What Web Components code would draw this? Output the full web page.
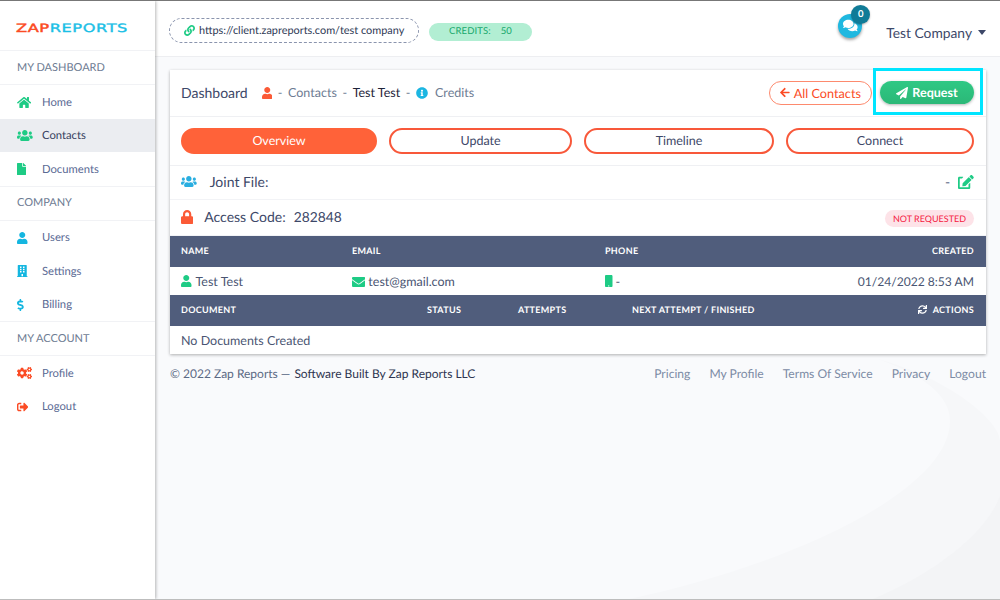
<!DOCTYPE html>
<html lang="en">
<head>
<meta charset="utf-8">
<title>Zap Reports</title>
<style>
html,body{margin:0;padding:0;height:100%;overflow:hidden}
body{font-family:Lato,"Liberation Sans",sans-serif;background:#f9fafc;text-rendering:geometricPrecision}
</style>
</head>
<body>
<zr-app>
  <zr-sidebar slot="side"></zr-sidebar>
  <zr-topbar slot="top"></zr-topbar>
  <zr-card slot="main">
    <zr-card-head></zr-card-head>
    <zr-tabs></zr-tabs>
    <zr-info-rows></zr-info-rows>
    <zr-table cols="171px 253px 1fr 200px">
      <span>Name</span><span>Email</span><span>Phone</span><span class="r">Created</span>
      <b slot="row"><zr-icon name="user" color="#1ecb85" h="12" gap="4"></zr-icon>Test Test</b>
      <b slot="row"><zr-icon name="envelope" color="#1ecb85" h="10" gap="3"></zr-icon>test@gmail.com</b>
      <b slot="row"><zr-icon name="mobile" color="#1ecb85" h="12" gap="3"></zr-icon>-</b>
      <b slot="row" class="r">01/24/2022 8:53 AM</b>
    </zr-table>
    <zr-table cols="246px 91px 114px 1fr 120px">
      <span>Document</span><span>Status</span><span>Attempts</span><span>Next Attempt / Finished</span>
      <span class="r"><zr-icon name="sync" color="#fff" h="9" gap="6"></zr-icon>Actions</span>
      <b slot="row" class="wide">No Documents Created</b>
    </zr-table>
  </zr-card>
  <zr-footer slot="main"></zr-footer>
</zr-app>
<script>
const P={
user:[448,512,"M224 256c70.7 0 128-57.3 128-128S294.7 0 224 0 96 57.3 96 128s57.3 128 128 128zm89.6 32h-16.7c-22.2 10.2-46.9 16-72.9 16s-50.6-5.8-72.9-16h-16.7C60.2 288 0 348.2 0 422.4V464c0 26.5 21.5 48 48 48h352c26.5 0 48-21.5 48-48v-41.6c0-74.2-60.2-134.4-134.4-134.4z"],
file:[384,512,"M224 136V0H24C10.7 0 0 10.7 0 24v464c0 13.3 10.7 24 24 24h336c13.3 0 24-10.7 24-24V160H248c-13.2 0-24-10.8-24-24zm160-14.1v6.1H256V0h6.1c6.4 0 12.5 2.5 17 7l97.9 98c4.5 4.5 7 10.6 7 16.9z"],
lock:[448,512,"M400 224h-24v-72C376 68.2 307.8 0 224 0S72 68.2 72 152v72H48c-26.5 0-48 21.5-48 48v192c0 26.5 21.5 48 48 48h352c26.5 0 48-21.5 48-48V272c0-26.5-21.5-48-48-48zm-104 0H152v-72c0-39.7 32.3-72 72-72s72 32.3 72 72v72z"],
envelope:[512,384,"M502.3 126.8c3.9-3.1 9.7-.2 9.7 4.7V336c0 26.5-21.5 48-48 48H48c-26.5 0-48-21.5-48-48V131.6c0-5 5.7-7.8 9.7-4.7 22.4 17.4 52.1 39.5 154.1 113.6 21.1 15.4 56.7 47.8 92.2 47.6 35.7.3 72-32.8 92.3-47.6 102-74.1 131.6-96.3 154-113.7zM256 256c23.2.4 56.6-29.2 73.4-41.4 132.7-96.3 142.8-104.7 173.4-128.7 5.8-4.5 9.2-11.5 9.2-18.9V48c0-26.5-21.5-48-48-48H48C21.5 0 0 21.5 0 48v19c0 7.4 3.4 14.3 9.2 18.9 30.6 23.9 40.7 32.4 173.4 128.7 16.8 12.2 50.2 41.8 73.4 41.4z"],
plane:[512,512,"M476 3.2L12.5 270.6c-18.1 10.4-15.8 35.6 2.2 43.2L121 358.4l287.3-253.2c5.5-4.9 13.3 2.6 8.6 8.3L176 407v80.5c0 23.6 28.5 32.9 42.5 15.8L282 426l124.6 52.2c14.2 6 30.4-2.9 33-18.2l72-432C515 7.8 493.3-6.8 476 3.2z"],
left:[448,512,"M257.5 445.1l-22.2 22.2c-9.4 9.4-24.6 9.4-33.9 0L7 273c-9.4-9.4-9.4-24.6 0-33.9L201.4 44.7c9.4-9.4 24.6-9.4 33.9 0l22.2 22.2c9.5 9.5 9.3 25-.4 34.3L136.6 216H424c13.3 0 24 10.7 24 24v32c0 13.3-10.7 24-24 24H136.6l120.5 114.8c9.8 9.3 10 24.8.4 34.3z"],
info:[512,512,"M256 8C119.043 8 8 119.083 8 256c0 136.997 111.043 248 248 248s248-111.003 248-248C504 119.083 392.957 8 256 8zm0 110c23.196 0 42 18.804 42 42s-18.804 42-42 42-42-18.804-42-42 18.804-42 42-42zm56 254c0 6.627-5.373 12-12 12h-88c-6.627 0-12-5.373-12-12v-24c0-6.627 5.373-12 12-12h12v-64h-12c-6.627 0-12-5.373-12-12v-24c0-6.627 5.373-12 12-12h64c6.627 0 12 5.373 12 12v100h12c6.627 0 12 5.373 12 12v24z"],
users:[640,448,"M96 192c35.3 0 64-28.7 64-64s-28.7-64-64-64-64 28.7-64 64 28.7 64 64 64zm448 0c35.3 0 64-28.7 64-64s-28.7-64-64-64-64 28.7-64 64 28.7 64 64 64zm32 32h-64c-17.6 0-33.5 7.1-45.1 18.6 40.3 22.1 68.9 62 75.1 109.4h66c17.7 0 32-14.3 32-32v-32c0-35.3-28.7-64-64-64zm-256 0c61.9 0 112-50.1 112-112S381.9 0 320 0 208 50.1 208 112s50.1 112 112 112zm76.8 32h-8.3c-20.8 10-43.9 16-68.5 16s-47.6-6-68.5-16h-8.3C179.6 256 128 307.6 128 371.2V400c0 26.5 21.5 48 48 48h288c26.5 0 48-21.5 48-48v-28.8c0-63.6-51.6-115.2-115.2-115.2zm-223.7-13.4C161.5 231.1 145.6 224 128 224H64c-35.3 0-64 28.7-64 64v32c0 17.7 14.3 32 32 32h65.9c6.3-47.4 34.9-87.3 75.2-109.4z"],
home:[576,448,"M280.37 116.26L96 268.11V432a16 16 0 0 0 16 16l112.06-.29a16 16 0 0 0 15.92-16V336a16 16 0 0 1 16-16h64a16 16 0 0 1 16 16v95.64a16 16 0 0 0 16 16.05L464 448a16 16 0 0 0 16-16V268L295.67 116.26a12.19 12.19 0 0 0-15.3 0zM571.6 219.47L488 150.56V12.05a12 12 0 0 0-12-12h-56a12 12 0 0 0-12 12v72.61L318.47 11a48 48 0 0 0-61 0L4.34 219.47a12 12 0 0 0-1.6 16.9l25.5 31A12 12 0 0 0 45.15 269l235.22-193.74a12.19 12.19 0 0 1 15.3 0L530.9 269a12 12 0 0 0 16.9-1.6l25.5-31a12 12 0 0 0-1.7-16.93z"],
building:[448,512,"M436 480h-20V24c0-13.255-10.745-24-24-24H56C42.745 0 32 10.745 32 24v456H12c-6.627 0-12 5.373-12 12v20h448v-20c0-6.627-5.373-12-12-12zM128 76c0-6.627 5.373-12 12-12h40c6.627 0 12 5.373 12 12v40c0 6.627-5.373 12-12 12h-40c-6.627 0-12-5.373-12-12V76zm0 96c0-6.627 5.373-12 12-12h40c6.627 0 12 5.373 12 12v40c0 6.627-5.373 12-12 12h-40c-6.627 0-12-5.373-12-12v-40zm52 148h-40c-6.627 0-12-5.373-12-12v-40c0-6.627 5.373-12 12-12h40c6.627 0 12 5.373 12 12v40c0 6.627-5.373 12-12 12zm76 160h-64v-84c0-6.627 5.373-12 12-12h40c6.627 0 12 5.373 12 12v84zm64-172c0 6.627-5.373 12-12 12h-40c-6.627 0-12-5.373-12-12v-40c0-6.627 5.373-12 12-12h40c6.627 0 12 5.373 12 12v40zm0-96c0 6.627-5.373 12-12 12h-40c-6.627 0-12-5.373-12-12v-40c0-6.627 5.373-12 12-12h40c6.627 0 12 5.373 12 12v40zm0-96c0 6.627-5.373 12-12 12h-40c-6.627 0-12-5.373-12-12V76c0-6.627 5.373-12 12-12h40c6.627 0 12 5.373 12 12v40z"],
dollar:[288,512,"M209.2 233.4l-108-31.6C88.7 198.2 80 186.5 80 173.5c0-16.3 13.2-29.5 29.5-29.5h66.3c12.2 0 24.2 3.7 34.2 10.5 6.1 4.1 14.3 3.1 19.5-2l34.8-34c7.1-6.9 6.1-18.4-1.8-24.5C238 74.8 207.4 64.1 176 64V16c0-8.8-7.2-16-16-16h-32c-8.8 0-16 7.2-16 16v48h-2.5C45.8 64-5.4 118.7.5 183.6c4.2 46.1 39.4 83.6 83.8 96.6l102.5 30c12.5 3.7 21.2 15.3 21.2 28.3 0 16.3-13.2 29.5-29.5 29.5h-66.3C100 368 88 364.3 78 357.5c-6.1-4.1-14.3-3.1-19.5 2l-34.8 34c-7.1 6.9-6.1 18.4 1.8 24.5 24.5 19.2 55.1 29.9 86.5 30v48c0 8.8 7.2 16 16 16h32c8.8 0 16-7.2 16-16v-48.2c46.6-.9 90.3-28.6 105.7-72.7 21.5-61.6-14.6-124.8-72.5-141.7z"],
signout:[512,448,"M497 241L329 409c-15 15-41 4.5-41-17v-96H152c-13.3 0-24-10.7-24-24v-96c0-13.3 10.7-24 24-24h136V56c0-21.4 25.9-32 41-17l168 168c9.3 9.4 9.3 24.6 0 34zM192 404v-40c0-6.6-5.4-12-12-12H96c-17.7 0-32-14.3-32-32V128c0-17.7 14.3-32 32-32h84c6.6 0 12-5.4 12-12V44c0-6.6-5.4-12-12-12H96C43 32 0 75 0 128v192c0 53 43 96 96 96h84c6.6 0 12-5.4 12-12z"],
link:[512,512,"M326.612 185.391c59.747 59.809 58.927 155.698.36 214.59-.11.12-.24.25-.36.37l-67.2 67.2c-59.27 59.27-155.699 59.262-214.96 0-59.27-59.26-59.27-155.7 0-214.96l37.106-37.106c9.84-9.84 26.786-3.3 27.294 10.606.648 17.722 3.826 35.527 9.69 52.721 1.986 5.822.567 12.262-3.783 16.612l-13.087 13.087c-28.026 28.026-28.905 73.66-1.155 101.96 28.024 28.579 74.086 28.749 102.325.51l67.2-67.19c28.191-28.191 28.073-73.757 0-101.83-3.701-3.694-7.429-6.564-10.341-8.569a16.037 16.037 0 0 1-6.947-12.606c-.396-10.567 3.348-21.456 11.698-29.806l21.054-21.055c5.521-5.521 14.182-6.199 20.584-1.731a152.482 152.482 0 0 1 20.522 17.197zM467.547 44.449c-59.261-59.262-155.69-59.27-214.96 0l-67.2 67.2c-.12.12-.25.25-.36.37-58.566 58.892-59.387 154.781.36 214.59a152.454 152.454 0 0 0 20.521 17.196c6.402 4.468 15.064 3.789 20.584-1.731l21.054-21.055c8.35-8.35 12.094-19.239 11.698-29.806a16.037 16.037 0 0 0-6.947-12.606c-2.912-2.005-6.64-4.875-10.341-8.569-28.073-28.073-28.191-73.639 0-101.83l67.2-67.19c28.239-28.239 74.3-28.069 102.325.51 27.75 28.3 26.872 73.934-1.155 101.96l-13.087 13.087c-4.35 4.35-5.769 10.79-3.783 16.612 5.864 17.194 9.042 34.999 9.69 52.721.509 13.906 17.454 20.446 27.294 10.606l37.106-37.106c59.271-59.259 59.271-155.699.001-214.959z"],
comments:[576,512,"M416 192c0-88.4-93.1-160-208-160S0 103.6 0 192c0 34.3 14.1 65.9 38 92-13.4 30.2-35.5 54.2-35.8 54.5-2.2 2.3-2.8 5.7-1.5 8.7S4.8 352 8 352c36.6 0 66.9-12.3 88.7-25 32.2 15.7 70.3 25 111.3 25 114.9 0 208-71.6 208-160zm122 220c23.9-26 38-57.7 38-92 0-66.9-53.5-124.2-129.3-148.1.9 6.6 1.3 13.3 1.3 20.1 0 105.9-107.7 192-240 192-10.8 0-21.3-.8-31.7-1.9C207.8 439.6 281.8 480 368 480c41 0 79.1-9.2 111.3-25 21.8 12.7 52.1 25 88.7 25 3.2 0 6.1-1.9 7.3-4.8 1.3-2.9.7-6.3-1.5-8.7-.3-.3-22.4-24.2-35.8-54.5z"],
edit:[576,512,"M402.6 83.2l90.2 90.2c3.8 3.8 3.8 10 0 13.8L274.4 405.6l-92.8 10.3c-12.4 1.4-22.9-9.1-21.5-21.5l10.3-92.8L388.8 83.2c3.8-3.8 10-3.8 13.8 0zm162-22.9l-48.8-48.8c-15.2-15.2-39.9-15.2-55.2 0l-35.4 35.4c-3.8 3.8-3.8 10 0 13.8l90.2 90.2c3.8 3.8 10 3.8 13.8 0l35.4-35.4c15.2-15.3 15.2-40 0-55.2zM384 346.2V448H64V128h73.2c3.2 0 6.2-1.3 8.5-3.5l40-40c7.6-7.6 2.2-20.5-8.5-20.5H48C21.5 64 0 85.5 0 112v352c0 26.5 21.5 48 48 48h352c26.5 0 48-21.5 48-48V306.2c0-10.7-12.9-16-20.5-8.5l-40 40c-2.2 2.3-3.5 5.3-3.5 8.5z"],
mobile:[320,512,"M272 0H48C21.5 0 0 21.5 0 48v416c0 26.5 21.5 48 48 48h224c26.5 0 48-21.5 48-48V48c0-26.5-21.5-48-48-48zM160 488c-15 0-27-11-27-24s12-24 27-24 27 11 27 24-12 24-27 24z"],
sync:[512,512,"M440.65 12.57l4 82.77A247.16 247.16 0 0 0 255.83 8C134.73 8 33.91 94.92 12.29 209.82A12 12 0 0 0 24.09 224h49.05a12 12 0 0 0 11.67-9.26 175.91 175.91 0 0 1 317-56.94l-101.46-4.86a12 12 0 0 0-12.57 12v47.41a12 12 0 0 0 12 12H500a12 12 0 0 0 12-12V12a12 12 0 0 0-12-12h-47.37a12 12 0 0 0-11.98 12.57zM255.83 432a175.61 175.61 0 0 1-146-77.8l101.8 4.87a12 12 0 0 0 12.57-12v-47.4a12 12 0 0 0-12-12H12a12 12 0 0 0-12 12V500a12 12 0 0 0 12 12h47.35a12 12 0 0 0 12-12.6l-4.15-82.57A247.17 247.17 0 0 0 255.83 504c121.11 0 221.93-86.92 243.55-201.82a12 12 0 0 0-11.8-14.18h-49.05a12 12 0 0 0-11.67 9.26A175.86 175.86 0 0 1 255.83 432z"],
cogs:[640,512,"M512.1 191l-8.2 14.3c-3 5.3-9.4 7.5-15.1 5.4-11.8-4.4-22.6-10.7-32.1-18.6-4.6-3.8-5.8-10.5-2.8-15.7l8.2-14.3c-6.9-8-12.3-17.3-15.9-27.4h-16.5c-6 0-11.2-4.3-12.2-10.3-2-12-2.1-24.6 0-37.1 1-6 6.2-10.4 12.2-10.4h16.5c3.6-10.1 9-19.4 15.9-27.4l-8.2-14.3c-3-5.2-1.9-11.9 2.8-15.7 9.5-7.9 20.4-14.2 32.1-18.6 5.7-2.1 12.1.1 15.1 5.4l8.2 14.3c10.5-1.9 21.2-1.9 31.7 0L552 6.3c3-5.3 9.4-7.5 15.1-5.4 11.8 4.4 22.6 10.7 32.1 18.6 4.6 3.8 5.8 10.5 2.8 15.7l-8.2 14.3c6.9 8 12.3 17.3 15.9 27.4h16.5c6 0 11.2 4.3 12.2 10.3 2 12 2.1 24.6 0 37.1-1 6-6.2 10.4-12.2 10.4h-16.5c-3.6 10.1-9 19.4-15.9 27.4l8.2 14.3c3 5.2 1.9 11.9-2.8 15.7-9.5 7.9-20.4 14.2-32.1 18.6-5.7 2.1-12.1-.1-15.1-5.4l-8.2-14.3c-10.4 1.9-21.2 1.9-31.7 0zm-10.5-58.8c38.5 29.6 82.4-14.3 52.8-52.8-38.5-29.7-82.4 14.3-52.8 52.8zM386.3 286.1l33.7 16.8c10.1 5.8 14.5 18.1 10.5 29.1-8.9 24.2-26.4 46.4-42.6 65.8-7.4 8.9-20.2 11.1-30.3 5.3l-29.1-16.8c-16 13.7-34.6 24.6-54.9 31.7v33.6c0 11.6-8.3 21.6-19.7 23.6-24.6 4.2-50.4 4.4-75.9 0-11.5-2-20-11.9-20-23.6V418c-20.3-7.2-38.9-18-54.9-31.7L74 403c-10 5.8-22.9 3.6-30.3-5.3-16.2-19.4-33.3-41.6-42.2-65.7-4-10.9.4-23.2 10.5-29.1l33.3-16.8c-3.9-20.9-3.9-42.4 0-63.4L12 205.8c-10.1-5.8-14.6-18.1-10.5-29 8.9-24.2 26-46.4 42.2-65.8 7.4-8.9 20.2-11.1 30.3-5.3l29.1 16.8c16-13.7 34.6-24.6 54.9-31.7V57.1c0-11.5 8.2-21.5 19.6-23.5 24.6-4.2 50.5-4.4 76-.1 11.5 2 20 11.9 20 23.6v33.6c20.3 7.2 38.9 18 54.9 31.7l29.1-16.8c10-5.8 22.9-3.6 30.3 5.3 16.2 19.4 33.2 41.6 42.1 65.8 4 10.9.1 23.2-10 29.1l-33.7 16.8c3.9 21 3.9 42.5 0 63.5zm-117.6 21.1c59.2-77-28.7-164.9-105.7-105.7-59.2 77 28.7 164.9 105.7 105.7zm243.4 182.7l-8.2 14.3c-3 5.3-9.4 7.5-15.1 5.4-11.8-4.4-22.6-10.7-32.1-18.6-4.6-3.8-5.8-10.5-2.8-15.7l8.2-14.3c-6.9-8-12.3-17.3-15.9-27.4h-16.5c-6 0-11.2-4.3-12.2-10.3-2-12-2.1-24.6 0-37.1 1-6 6.2-10.4 12.2-10.4h16.5c3.6-10.1 9-19.4 15.9-27.4l-8.2-14.3c-3-5.2-1.9-11.9 2.8-15.7 9.5-7.9 20.4-14.2 32.1-18.6 5.7-2.1 12.1.1 15.1 5.4l8.2 14.3c10.5-1.9 21.2-1.9 31.7 0l8.2-14.3c3-5.3 9.4-7.5 15.1-5.4 11.8 4.4 22.6 10.7 32.1 18.6 4.6 3.8 5.8 10.5 2.8 15.7l-8.2 14.3c6.9 8 12.3 17.3 15.9 27.4h16.5c6 0 11.2 4.3 12.2 10.3 2 12 2.1 24.6 0 37.1-1 6-6.2 10.4-12.2 10.4h-16.5c-3.6 10.1-9 19.4-15.9 27.4l8.2 14.3c3 5.2 1.9 11.9-2.8 15.7-9.5 7.9-20.4 14.2-32.1 18.6-5.7 2.1-12.1-.1-15.1-5.4l-8.2-14.3c-10.4 1.9-21.2 1.9-31.7 0zM501.6 431c38.5 29.6 82.4-14.3 52.8-52.8-38.5-29.6-82.4 14.3-52.8 52.8z"]
};
function def(tag,html,setup){
  customElements.define(tag,class extends HTMLElement{
    connectedCallback(){
      if(this.shadowRoot)return;
      const s=this.attachShadow({mode:"open"});
      s.innerHTML=typeof html==="function"?html(this):html;
      if(setup)setup(this,s);
    }
  });
}
def("zr-icon",el=>{
  const [w,h,d]=P[el.getAttribute("name")];
  const H=+el.getAttribute("h")||12;
  return `<style>:host{display:inline-flex;vertical-align:-1px;line-height:0;margin-right:${el.getAttribute("gap")||0}px}svg{display:block}</style>
  <svg xmlns="http://www.w3.org/2000/svg" viewBox="0 0 ${w} ${h}" width="${(H*w/h).toFixed(2)}" height="${H}" fill="${el.getAttribute("color")||"currentColor"}"><path d="${d}"/></svg>`;
});
def("zr-app",`<style>
:host{display:grid;grid-template-columns:155px 1fr;grid-template-rows:56px 1fr;width:1000px;height:600px;box-sizing:border-box;border-top:1px solid #777;border-bottom:1px solid #bdbdbd;position:relative;overflow:hidden;background:#f9fafc}
.bg{position:absolute;inset:0;z-index:0}
::slotted([slot=side]){grid-row:1 / 3;z-index:2}
::slotted([slot=top]){z-index:1}
main{position:relative;z-index:1;padding:13px 14px 0 15px;min-width:0}
</style>
<svg class="bg" width="1000" height="600" viewBox="0 0 1000 600">
<path d="M620 600C790 565 950 490 950 420C950 395 925 375 878 358C950 378 1000 420 1000 440V600Z" fill="#f6f7f9"/>
<path d="M868 600C930 575 985 535 1000 495V600Z" fill="#f3f4f6"/>
</svg>
<slot name="side"></slot><slot name="top"></slot><main><slot name="main"></slot></main>`);
def("zr-nav-heading",`<style>:host{display:flex;align-items:center;box-sizing:border-box;height:35px;padding:0 0 1px 17px;font-size:11px;color:#6d7b92;border-bottom:1px solid #f1f2f5;border-top:1px solid #f1f2f5}</style><slot></slot>`);
def("zr-nav-item",el=>`<style>:host{display:flex;align-items:center;box-sizing:border-box;height:33.5px;padding-top:1px;font-size:11.25px;color:${el.hasAttribute("active")?"#36415f":"#5a6a94"};background:${el.hasAttribute("active")?"#ebedf1":"transparent"}}
.i{width:42px;box-sizing:border-box;padding-left:17px;display:flex;align-items:center}</style>
<span class="i"><zr-icon name="${el.getAttribute("icon")}" color="${el.getAttribute("color")}" h="${el.getAttribute("h")||11}"></zr-icon></span><slot></slot>`);
def("zr-logo",`<style>:host{display:flex;align-items:center;height:49px;padding:4px 0 0 16px;box-sizing:border-box;font:400 11.5px "DejaVu Sans",sans-serif;letter-spacing:.4px}
.w{display:inline-block;transform:scaleX(1.41);transform-origin:left center;white-space:nowrap}
.a{color:#fb4b24;-webkit-text-stroke:.45px #fb4b24}.b{color:#1bbfe6;-webkit-text-stroke:.35px #1bbfe6}</style><span class="w"><span class="a">ZAP</span><span class="b">REPORTS</span></span>`);
def("zr-sidebar",`<style>:host{display:block;background:#fff;box-shadow:1px 0 3px rgba(0,0,0,.28);height:100%}</style>
<zr-logo></zr-logo>
<zr-nav-heading>MY DASHBOARD</zr-nav-heading>
<zr-nav-item icon="home" color="#1ecb85" h="11">Home</zr-nav-item>
<zr-nav-item icon="users" color="#1ecb85" h="11" active>Contacts</zr-nav-item>
<zr-nav-item icon="file" color="#1ecb85" h="12">Documents</zr-nav-item>
<zr-nav-heading>COMPANY</zr-nav-heading>
<zr-nav-item icon="user" color="#14b6e0" h="12">Users</zr-nav-item>
<zr-nav-item icon="building" color="#14b6e0" h="12">Settings</zr-nav-item>
<zr-nav-item icon="dollar" color="#14b6e0" h="12">Billing</zr-nav-item>
<zr-nav-heading>MY ACCOUNT</zr-nav-heading>
<zr-nav-item icon="cogs" color="#fb4b24" h="12">Profile</zr-nav-item>
<zr-nav-item icon="signout" color="#fb4b24" h="10">Logout</zr-nav-item>`);
def("zr-topbar",`<style>
:host{display:flex;align-items:center;box-sizing:border-box;background:#fff;height:56px;border-bottom:1px solid #edeef1;padding:4px 14px 0 14px;color:#36415f}
.url{display:flex;align-items:center;gap:4px;box-sizing:border-box;height:25px;width:250px;padding-left:14px;border:1px dashed #8a94ad;border-radius:13px;font-size:10.9px;color:#2f3a56;white-space:nowrap}
.cr{display:flex;align-items:center;justify-content:center;gap:10px;box-sizing:border-box;margin:2px 0 0 10px;width:103px;height:18px;border-radius:9px;background:#b2eed3;color:#16a86b;font-size:9.5px;letter-spacing:.1px}
.cr b{font-weight:400}
.sp{flex:1}
.chat{position:relative;width:24px;height:24px;border-radius:50%;background:#1fb8e0;display:flex;align-items:center;justify-content:center;margin:0 24px 0 0;box-shadow:0 2px 3px rgba(0,0,0,.35);top:-5px}
.n{position:absolute;left:13px;top:-9px;width:19px;height:19px;border-radius:50%;background:#107b97;color:#fff;font-size:9.5px;font-weight:700;display:flex;align-items:center;justify-content:center;box-shadow:0 1px 2px rgba(0,0,0,.3)}
.co{font-size:13.8px;color:#3d4868;display:flex;align-items:center;gap:6px;position:relative;top:2px}
.car{width:0;height:0;border-left:4.5px solid transparent;border-right:4.5px solid transparent;border-top:5px solid #3d4868}
</style>
<div class="url"><zr-icon name="link" color="#1ecb85" h="11"></zr-icon><span>https://client.zapreports.com/test company</span></div>
<div class="cr"><span>CREDITS:</span><b>50</b></div>
<div class="sp"></div>
<div class="chat"><zr-icon name="comments" color="#fff" h="13"></zr-icon><span class="n">0</span></div>
<div class="co">Test Company<span class="car"></span></div>`);
def("zr-card",`<style>:host{display:block;background:#fff;box-shadow:0 1px 3px rgba(0,0,0,.3)}</style><slot></slot>`);
def("zr-card-head",`<style>
:host{display:flex;align-items:center;box-sizing:border-box;height:47px;padding:0 12px 1px 11px;border-bottom:1px solid #eff0f3;font-size:12.5px;color:#6d7b92}
.t{font-size:14px;color:#3d4868;margin-right:14px}
.m{margin:0 5.6px}
.k{color:#1d2338}
.sp{flex:1}
.all{display:flex;align-items:center;justify-content:center;gap:4px;box-sizing:border-box;width:103px;height:24px;border:1px solid #fd8a6e;border-radius:12px;color:#fb4b24;font-size:12.7px;margin-right:8px}
.req{position:relative;display:flex;align-items:center;justify-content:center;gap:4px;width:94px;height:23px;border-radius:12px;background:linear-gradient(#2fc884,#2bb877);color:#fff;font-size:12.5px;font-weight:700;box-shadow:0 1px 3px rgba(0,0,0,.3)}
.hl{position:absolute;left:-7px;right:-9px;top:-13px;bottom:-11px;border:3px solid #00e5ff;pointer-events:none}
</style>
<span class="t">Dashboard</span>
<zr-icon name="user" color="#fb5a36" h="12"></zr-icon><span class="m">-</span><span>Contacts</span><span class="m">-</span><span class="k">Test Test</span><span class="m">-</span>
<zr-icon name="info" color="#1cb6e2" h="12"></zr-icon><span style="margin-left:7px">Credits</span>
<span class="sp"></span>
<span class="all"><zr-icon name="left" color="#fb4b24" h="11"></zr-icon>All Contacts</span>
<span class="req"><zr-icon name="plane" color="#fff" h="12"></zr-icon>Request<span class="hl"></span></span>`);
def("zr-tabs",`<style>
:host{display:grid;grid-template-columns:196px 183px 190px 188px;column-gap:12px;box-sizing:border-box;height:49px;padding:11px 12px 0 11px;border-bottom:1px solid #eff0f3;font-size:12.5px;color:#3d4868}
span{display:flex;align-items:center;justify-content:center;box-sizing:border-box;height:26px;padding-bottom:2px;border-radius:13px;border:2px solid #f8583a;background:#fff}
.on{background:#ff6239;border-color:#ff6239;color:#fff}
</style><span class="on">Overview</span><span>Update</span><span>Timeline</span><span>Connect</span>`);
def("zr-info-rows",`<style>
:host{display:block;font-size:14px;color:#3d4868}
.r{display:flex;align-items:center;box-sizing:border-box;padding:0 12px 2px 11px;height:34px;border-bottom:1px solid #f2f3f6}
.j{margin-left:13px}
.a{margin-left:11px}
.c{margin-left:8px;font-size:13.8px}
.sp{flex:1}
.ns{display:flex;align-items:center;justify-content:center;box-sizing:border-box;width:89px;height:17px;margin-top:4px;border-radius:9px;background:#fde3e8;color:#f5193f;font-size:9px}
.d{margin-right:8px;color:#5b6785}
</style>
<div class="r"><zr-icon name="users" color="#2aaee0" h="11"></zr-icon><span class="j">Joint File:</span><span class="sp"></span><span class="d">-</span><zr-icon name="edit" color="#1ecb85" h="14"></zr-icon></div>
<div class="r" style="height:36px"><zr-icon name="lock" color="#fb5a36" h="14"></zr-icon><span class="a">Access Code:</span><span class="c">282848</span><span class="sp"></span><span class="ns">NOT REQUESTED</span></div>`);
def("zr-table",el=>`<style>
:host{display:block}
.h,.b{display:grid;grid-template-columns:${el.getAttribute("cols")};box-sizing:border-box;padding:0 12px 0 11px;align-items:center}
.h{height:31px;padding-bottom:2px;background:#505d7c;color:#fff;font-size:9px;font-weight:700;letter-spacing:.3px;text-transform:uppercase}
.b{height:28px;background:#fff;color:#4a5572;font-size:12.5px}
::slotted(.r){text-align:right}
::slotted(b.r){font-size:12.1px}
::slotted(b){font-weight:400}
::slotted(.wide){grid-column:1 / -1;color:#4a5572}
</style><div class="h"><slot></slot></div><div class="b"><slot name="row"></slot></div>`);
def("zr-footer",`<style>
:host{display:flex;align-items:center;height:38px;font-size:12px;color:#5c6a85}
.k{color:#2e3550;margin-left:4px}
.sp{flex:1}
a{color:#7c8ba5;margin-left:19px;text-decoration:none;font-size:12.1px}
</style><span>© 2022 Zap Reports —</span><span class="k">Software Built By Zap Reports LLC</span><span class="sp"></span>
<a>Pricing</a><a>My Profile</a><a>Terms Of Service</a><a>Privacy</a><a>Logout</a>`);
</script>
</body>
</html>
